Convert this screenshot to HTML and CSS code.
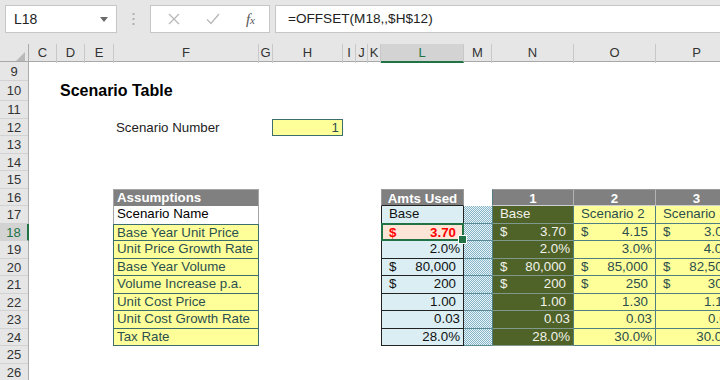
FILE: index.html
```html
<!DOCTYPE html>
<html lang="en">
<head>
  <meta charset="UTF-8">
  <title>Scenario Table</title>
  <link rel="stylesheet" href="styles.css">
</head>
<body>
  <!-- Formula bar -->
  <div class="toolbar">
    <div class="name-box">
      <span>L18</span>
      <svg width="8" height="5" viewBox="0 0 8 5"><path d="M0 0h8L4 5z" fill="#6a6a6a"/></svg>
    </div>
    <div class="grip">
      <svg width="3" height="14" viewBox="0 0 3 14">
        <rect x="0.5" y="1" width="2" height="2" fill="#b0b0b0"/>
        <rect x="0.5" y="6" width="2" height="2" fill="#b0b0b0"/>
        <rect x="0.5" y="11" width="2" height="2" fill="#b0b0b0"/>
      </svg>
    </div>
    <div class="fx-box">
      <svg width="12" height="12" viewBox="0 0 12 12"><path d="M1 1l10 10M11 1L1 11" stroke="#b8b8b8" stroke-width="1.3" fill="none"/></svg>
      <svg width="14" height="12" viewBox="0 0 14 12"><path d="M1 6.5l4 4L13 1" stroke="#b8b8b8" stroke-width="1.3" fill="none"/></svg>
      <span class="fx">f<small>x</small></span>
    </div>
    <div class="formula">=OFFSET(M18,,$H$12)</div>
  </div>

  <div class="sheet">
    <!-- Column headers -->
    <div class="col-heads">
      <div class="corner">
        <svg width="9" height="9" viewBox="0 0 9 9"><path d="M9 0v9H0z" fill="#b9b9b9"/></svg>
      </div>
      <div>C</div><div>D</div><div>E</div><div>F</div><div>G</div><div>H</div>
      <div>I</div><div>J</div><div>K</div><div class="active">L</div><div>M</div>
      <div>N</div><div>O</div><div>P</div>
    </div>

    <div class="sheet-body">
      <!-- Row headers -->
      <div class="row-heads">
        <div class="r9">9</div><div class="r10">10</div><div>11</div><div>12</div>
        <div>13</div><div>14</div><div>15</div><div>16</div><div>17</div>
        <div class="active">18</div><div>19</div><div>20</div><div>21</div>
        <div>22</div><div>23</div><div>24</div><div>25</div><div>26</div>
      </div>

      <!-- Cells -->
      <div class="cells">
        <div class="title">Scenario Table</div>
        <div class="scen-label">Scenario Number</div>
        <div class="scen-input">1</div>

        <div class="assump">
          <div class="th">Assumptions</div>
          <div class="name-row">Scenario Name</div>
          <div class="in">Base Year Unit Price</div>
          <div class="in">Unit Price Growth Rate</div>
          <div class="in">Base Year Volume</div>
          <div class="in">Volume Increase p.a.</div>
          <div class="in">Unit Cost Price</div>
          <div class="in">Unit Cost Growth Rate</div>
          <div class="in">Tax Rate</div>
        </div>

        <div class="amts">
          <div class="th">Amts Used</div>
          <div class="td txt">Base</div>
          <div class="td acc selected"><span>$</span><span>3.70</span></div>
          <div class="td pct">2.0%</div>
          <div class="td acc"><span>$</span><span>80,000</span></div>
          <div class="td acc"><span>$</span><span>200</span></div>
          <div class="td num">1.00</div>
          <div class="td pct">0.03</div>
          <div class="td pct">28.0%</div>
        </div>

        <div class="hatch">
          <div></div><div></div><div></div><div></div>
          <div></div><div></div><div></div><div></div>
        </div>

        <div class="scen">
          <div class="tr head"><div>1</div><div>2</div><div>3</div></div>
          <div class="tr">
            <div class="txt">Base</div><div class="txt">Scenario 2</div><div class="txt">Scenario 3</div>
          </div>
          <div class="tr">
            <div class="acc"><span>$</span><span>3.70</span></div>
            <div class="acc"><span>$</span><span>4.15</span></div>
            <div class="acc"><span>$</span><span>3.00</span></div>
          </div>
          <div class="tr">
            <div class="pct">2.0%</div><div class="pct">3.0%</div><div class="pct">4.0%</div>
          </div>
          <div class="tr">
            <div class="acc"><span>$</span><span>80,000</span></div>
            <div class="acc"><span>$</span><span>85,000</span></div>
            <div class="acc"><span>$</span><span>82,500</span></div>
          </div>
          <div class="tr">
            <div class="acc"><span>$</span><span>200</span></div>
            <div class="acc"><span>$</span><span>250</span></div>
            <div class="acc"><span>$</span><span>300</span></div>
          </div>
          <div class="tr">
            <div class="num">1.00</div><div class="num">1.30</div><div class="num">1.10</div>
          </div>
          <div class="tr">
            <div class="pct">0.03</div><div class="pct">0.03</div><div class="pct">0.03</div>
          </div>
          <div class="tr">
            <div class="pct">28.0%</div><div class="pct">30.0%</div><div class="pct">30.0%</div>
          </div>
        </div>
      </div>
    </div>
  </div>
</body>
</html>
```

FILE: styles.css
```css
/* Reset some default styles */
* {
  margin: 0;
  padding: 0;
  box-sizing: border-box;
}

body {
  width: 720px;
  height: 380px;
  overflow: hidden;
  background: #ffffff;
  font-family: 'Liberation Sans', Arial, sans-serif;
  color: #000;
}

/* Formula bar */
.toolbar {
  height: 44px;
  background: #e6e6e6;
  display: flex;
  align-items: flex-start;
  padding: 5px 0 0 5px;
}

.name-box {
  width: 112px;
  height: 28px;
  background: #fff;
  border: 1px solid #c6c6c6;
  display: flex;
  align-items: center;
  justify-content: space-between;
  padding: 0 8px 0 8px;
  font-size: 14px;
  color: #222;
}

.grip {
  width: 33px;
  height: 28px;
  display: flex;
  align-items: center;
  justify-content: center;
}

.fx-box {
  width: 120px;
  height: 28px;
  background: #fff;
  border: 1px solid #c6c6c6;
  display: flex;
  align-items: center;
  justify-content: space-between;
  padding: 0 14px 0 17px;
}

.fx {
  font-family: 'Liberation Serif', serif;
  font-style: italic;
  font-size: 15px;
  color: #555;
}

.fx small {
  font-size: 11px;
}

.formula {
  flex: 1;
  height: 28px;
  margin-left: 5px;
  background: #fff;
  border: 1px solid #c6c6c6;
  border-right: none;
  padding-left: 12px;
  line-height: 26px;
  font-size: 13.6px;
  color: #222;
}

/* Sheet */
.sheet {
  overflow: hidden;
}

.col-heads {
  display: grid;
  grid-template-columns: 29px 28px 28px 29px 145px 14px 70px 13px 12px 13px 83px 28px 82px 82px 82px;
  height: 18px;
  background: #e6e6e6;
  border-bottom: 1px solid #a8a8a8;
  font-size: 13px;
  color: #333;
}

.col-heads div {
  border-right: 1px solid #c8c8c8;
  text-align: center;
  line-height: 17px;
}

.col-heads .corner {
  border-right: 1px solid #ababab;
  display: flex;
  align-items: flex-end;
  justify-content: flex-end;
  padding: 0 3px 2px 0;
}

.col-heads .active {
  background: #d3d3d3;
  color: #217346;
  border-bottom: 2px solid #217346;
}

.sheet-body {
  display: flex;
}

.row-heads {
  width: 29px;
  flex-shrink: 0;
  background: #e6e6e6;
  border-right: 1px solid #ababab;
  font-size: 13px;
  color: #333;
}

.row-heads div {
  height: 17.5px;
  line-height: 17px;
  text-align: center;
  border-bottom: 1px solid #d2d2d2;
}

.row-heads .r9 {
  height: 19px;
  line-height: 19px;
}

.row-heads .r10 {
  height: 20px;
  line-height: 20px;
}

.row-heads .active {
  background: #d3d3d3;
  color: #217346;
  margin-right: -1px;
  border-right: 2px solid #217346;
}

.cells {
  display: grid;
  grid-template-columns: 28px 28px 29px 145px 14px 70px 13px 12px 13px 83px 28px 82px 82px 82px;
  grid-template-rows: 19px 20px repeat(16, 17.5px);
  font-size: 13.3px;
}

.title {
  grid-column: 2 / 5;
  grid-row: 2;
  padding-left: 3px;
  font-size: 16px;
  font-weight: bold;
  line-height: 20px;
}

.scen-label {
  grid-column: 4;
  grid-row: 4;
  padding-left: 2px;
  line-height: 17.5px;
  color: #222;
}

.scen-input {
  grid-column: 6;
  grid-row: 4;
  margin-left: -1px;
  background: #ffff99;
  border: 1px solid #3d6e6e;
  text-align: right;
  padding-right: 3px;
  line-height: 16px;
  color: #2b4d4d;
}

/* Assumptions */
.assump {
  grid-column: 4;
  grid-row: 8 / 17;
  margin-left: -1px;
}

.assump div {
  height: 17.5px;
  line-height: 16.5px;
  padding-left: 3px;
  white-space: nowrap;
}

.assump .th {
  background: #808080;
  color: #fff;
  font-weight: bold;
  border: 1px solid #a6a6a6;
  border-bottom: none;
}

.assump .name-row {
  background: #fff;
  border-left: 1px solid #a6a6a6;
  border-right: 1px solid #a6a6a6;
}

.assump .in {
  background: #ffff99;
  color: #2b5050;
  border: 1px solid #3d6e6e;
  border-top: none;
}

.assump .name-row + .in {
  border-top: 1px solid #3d6e6e;
}

/* Amounts used */
.amts {
  grid-column: 10;
  grid-row: 8 / 17;
}

.amts .th {
  height: 17.5px;
  background: #808080;
  color: #fff;
  font-weight: bold;
  text-align: center;
  line-height: 17px;
  border: 1px solid #9a9a9a;
  border-bottom: 1px solid #222;
}

.td {
  height: 17.5px;
  line-height: 16.5px;
  background: #daeef3;
  border: 1px solid #222;
  border-top: none;
  white-space: nowrap;
  color: #111;
}

.txt {
  padding-left: 7px;
}

.acc {
  display: flex;
  justify-content: space-between;
  padding: 0 7px 0 7px;
}

.num {
  text-align: right;
  padding-right: 7px;
}

.pct {
  text-align: right;
  padding-right: 3px;
}

.amts .selected {
  position: relative;
  background: #fce4d6;
  color: #ff0000;
  font-weight: bold;
  border: 2px solid #217346;
  margin-top: -1px;
  height: 18.5px;
  line-height: 15px;
  padding: 0 6px 0 6px;
}

.amts .selected::after {
  content: '';
  position: absolute;
  right: -5px;
  bottom: -5px;
  width: 7px;
  height: 7px;
  background: #217346;
  border: 1px solid #fff;
}

/* Hatched spacer column */
.hatch {
  grid-column: 11;
  grid-row: 9 / 17;
}

.hatch div {
  height: 17.5px;
  background: repeating-conic-gradient(#86b6c7 0 25%, #e8f3f7 0 50%) 0 0 / 2px 2px;
  border-bottom: 1px solid #5b8b98;
}

/* Scenario columns */
.scen {
  grid-column: 12 / 15;
  grid-row: 8 / 17;
}

.tr {
  display: flex;
  height: 17.5px;
}

.tr div {
  width: 82px;
  flex-shrink: 0;
  line-height: 16.5px;
  background: #ffff99;
  color: #2b4d4d;
  border-right: 1px solid #4f7f80;
  border-bottom: 1px solid #4f7f80;
  white-space: nowrap;
  overflow: hidden;
}

.tr div:first-child {
  background: #4f6228;
  color: #f2f2ea;
  border-left: 1px solid #4f7f80;
  border-bottom-color: #7f9a8c;
}

.tr.head div {
  background: #808080;
  color: #fff;
  font-weight: bold;
  text-align: center;
  line-height: 17px;
  border-top: 1px solid #9a9a9a;
  border-right: 1px solid #b4b4b4;
  border-bottom: 1px solid #d0d0d0;
}
```
